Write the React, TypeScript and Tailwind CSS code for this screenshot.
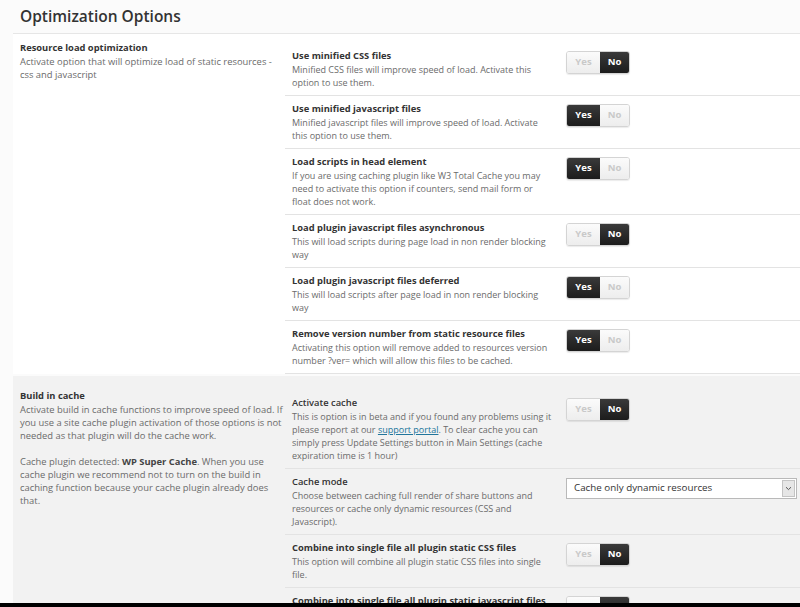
import React from 'react';

type Row = {
  title: string;
  desc: React.ReactNode;
  value?: 'yes' | 'no';
  select?: string;
  light?: boolean;
};

const resourceRows: Row[] = [
  {
    title: 'Use minified CSS files',
    desc: 'Minified CSS files will improve speed of load. Activate this option to use them.',
    value: 'no',
  },
  {
    title: 'Use minified javascript files',
    desc: 'Minified javascript files will improve speed of load. Activate this option to use them.',
    value: 'yes',
  },
  {
    title: 'Load scripts in head element',
    desc: 'If you are using caching plugin like W3 Total Cache you may need to activate this option if counters, send mail form or float does not work.',
    value: 'yes',
  },
  {
    title: 'Load plugin javascript files asynchronous',
    desc: 'This will load scripts during page load in non render blocking way',
    value: 'no',
  },
  {
    title: 'Load plugin javascript files deferred',
    desc: 'This will load scripts after page load in non render blocking way',
    value: 'yes',
  },
  {
    title: 'Remove version number from static resource files',
    desc: 'Activating this option will remove added to resources version number ?ver= which will allow this files to be cached.',
    value: 'yes',
  },
];

const cacheRows: Row[] = [
  {
    title: 'Activate cache',
    light: true,
    desc: (
      <>
        This is option is in beta and if you found any problems using it please report at our{' '}
        <a href="#" className="text-[#21759b] underline">
          support portal
        </a>
        . To clear cache you can simply press Update Settings button in Main Settings (cache expiration time is 1 hour)
      </>
    ),
    value: 'no',
  },
  {
    title: 'Cache mode',
    light: true,
    desc: 'Choose between caching full render of share buttons and resources or cache only dynamic resources (CSS and Javascript).',
    select: 'Cache only dynamic resources',
  },
  {
    title: 'Combine into single file all plugin static CSS files',
    desc: 'This option will combine all plugin static CSS files into single file.',
    value: 'no',
  },
  {
    title: 'Combine into single file all plugin static javascript files',
    desc: 'This option will combine all plugin static javascript files into single file.',
    value: 'no',
  },
];

function Toggle({ value }: { value: 'yes' | 'no' }) {
  const on = 'bg-gradient-to-b from-[#3a3a3a] to-[#1c1c1c] text-white';
  const off = 'bg-gradient-to-b from-[#fbfbfb] to-[#ededed] text-[#c9c9c9]';
  return (
    <div className="mt-[2px] flex h-[23px] overflow-hidden rounded-[3px] border border-[#d4d4d4] text-[9.5px] font-bold shadow-[0_1px_1px_rgba(0,0,0,0.08)]">
      <span className={`flex w-[33px] items-center justify-center ${value === 'yes' ? on : off}`}>Yes</span>
      <span className={`flex w-[29px] items-center justify-center ${value === 'no' ? on : off}`}>No</span>
    </div>
  );
}

function Select({ label }: { label: string }) {
  return (
    <div className="mt-[3px] flex h-[21px] w-[231px] items-center border border-[#b9b9b9] bg-white pl-[7px] text-[9.8px] text-[#333]">
      <span className="flex-1">{label}</span>
      <span className="mr-[1px] flex h-[17px] w-[13px] items-center justify-center border border-[#c4c4c4] bg-[#e6e6e6]">
        <svg width="7" height="5" viewBox="0 0 7 5">
          <path d="M1 1.2 L3.5 3.6 L6 1.2" fill="none" stroke="#555" strokeWidth="1" />
        </svg>
      </span>
    </div>
  );
}

function OptionRow({ row }: { row: Row }) {
  return (
    <div className="flex border-b border-[#e3e3e3] pl-[7px] pt-[6px] pb-[6px]">
      <div className="w-[274px] pr-[14px]">
        <div className={`text-[9.35px] leading-[14px] text-[#333] ${row.light ? 'font-semibold' : 'font-bold'}`}>
          {row.title}
        </div>
        <div className="text-[9px] leading-[13px] text-[#6b6b6b]">{row.desc}</div>
      </div>
      <div>{row.select ? <Select label={row.select} /> : <Toggle value={row.value ?? 'no'} />}</div>
    </div>
  );
}

export default function App() {
  return (
    <div className="flex h-[607px] flex-col overflow-hidden bg-[#fbfbfb] font-['Open_Sans',sans-serif]">
      <div className="h-[603px] overflow-hidden pl-[13px]">
        {/* Heading */}
        <div className="flex h-[34px] items-center border-b border-[#e6e6e6] pl-[7px]">
          <h1 className="text-[15.5px] font-semibold text-[#333]">Optimization Options</h1>
        </div>

        {/* Resource load optimization */}
        <div className="flex bg-white">
          <div className="w-[272px] shrink-0 pl-[7px] pt-[7px]">
            <div className="text-[9.35px] font-bold leading-[14px] text-[#333]">Resource load optimization</div>
            <p className="w-[256px] text-[9.4px] leading-[13px] text-[#6b6b6b]">
              Activate option that will optimize load of static resources - css and javascript
            </p>
          </div>
          <div className="flex-1 pt-[9px]">
            {resourceRows.map((row, idx) => (
              <OptionRow key={idx} row={row} />
            ))}
          </div>
        </div>

        {/* Build in cache */}
        <div className="mt-[2px] flex bg-[#f2f2f2]">
          <div className="w-[272px] shrink-0 pl-[7px] pt-[13px]">
            <div className="text-[9.35px] font-bold leading-[14px] text-[#333]">Build in cache</div>
            <p className="w-[268px] text-[9.4px] leading-[13px] text-[#6b6b6b]">
              Activate build in cache functions to improve speed of load. If you use a site cache plugin activation of
              those options is not needed as that plugin will do the cache work.
            </p>
            <p className="mt-[13px] w-[268px] text-[9.4px] leading-[13px] text-[#6b6b6b]">
              Cache plugin detected: <span className="font-bold text-[#444]">WP Super Cache</span>. When you use cache
              plugin we recommend not to turn on the build in caching function because your cache plugin already does
              that.
            </p>
          </div>
          <div className="flex-1 pt-[14px]">
            {cacheRows.map((row, idx) => (
              <OptionRow key={idx} row={row} />
            ))}
          </div>
        </div>
      </div>
      <div className="h-[4px] bg-black" />
    </div>
  );
}
